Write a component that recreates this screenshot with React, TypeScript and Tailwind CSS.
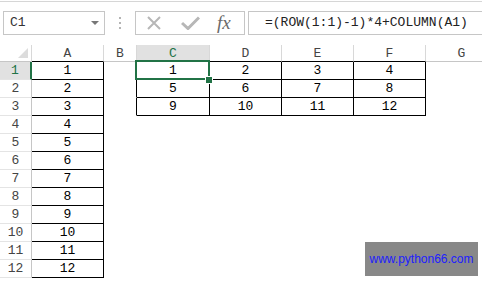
import React from 'react';

const cols = [
  { key: 'A', w: 'w-[72px]' },
  { key: 'B', w: 'w-[33px]' },
  { key: 'C', w: 'w-[73px]' },
  { key: 'D', w: 'w-[72px]' },
  { key: 'E', w: 'w-[72px]' },
  { key: 'F', w: 'w-[72px]' },
  { key: 'G', w: 'w-[72px]' },
];

const table = [
  [1, 2, 3, 4],
  [5, 6, 7, 8],
  [9, 10, 11, 12],
];

// value + border colours for one cell
const cellInfo = (col: string, row: number) => {
  const inA = col === 'A';
  const inBlock = ['C', 'D', 'E', 'F'].includes(col) && row <= 3;
  let value: number | string = '';
  if (inA) value = row;
  if (inBlock) value = table[row - 1][['C', 'D', 'E', 'F'].indexOf(col)];
  const right = inA || inBlock || (col === 'B' && row <= 3) ? 'border-r-black' : 'border-r-transparent';
  const bottom = inA || inBlock ? 'border-b-black' : 'border-b-transparent';
  return { value, right, bottom };
};

function CrossIcon() {
  return (
    <svg width="16" height="14" viewBox="0 0 16 14">
      <path d="M2 1 L14 13 M14 1 L2 13" stroke="#b7b7b7" strokeWidth="2" fill="none" />
    </svg>
  );
}

function CheckIcon() {
  return (
    <svg width="19" height="14" viewBox="0 0 19 14">
      <path d="M1 7 L7 12.5 L18 1.5" stroke="#b7b7b7" strokeWidth="3" fill="none" />
    </svg>
  );
}

export default function App() {
  const rows = Array.from({ length: 12 }, (_, i) => i + 1);

  return (
    <div className="w-[482px] h-[281px] overflow-hidden bg-white font-['Liberation_Mono',monospace] text-[13px]">
      {/* formula bar */}
      <div className="mt-[1px] h-[44px] border-t border-[#d6d6d6] flex items-start pt-[9px]">
        <div className="ml-[3px] w-[102px] h-[24px] border border-[#c6c6c6] flex items-center justify-between pl-[6px] pr-[5px] text-[#333]">
          <span>C1</span>
          <span className="w-0 h-0 border-l-[4px] border-r-[4px] border-t-[4px] border-l-transparent border-r-transparent border-t-[#777]" />
        </div>
        <div className="ml-[14px] mt-[6px] flex flex-col gap-[3px]">
          <span className="w-[2px] h-[2px] bg-[#b4b4b4]" />
          <span className="w-[2px] h-[2px] bg-[#b4b4b4]" />
          <span className="w-[2px] h-[2px] bg-[#b4b4b4]" />
        </div>
        <div className="ml-[14px] w-[110px] h-[24px] border border-[#c6c6c6] flex items-center pl-[10px]">
          <CrossIcon />
          <span className="ml-[19px]"><CheckIcon /></span>
          <span className="ml-[17px] font-['Liberation_Serif',serif] italic text-[19px] leading-none text-[#6a6a6a] -mt-[2px]">fx</span>
        </div>
        <div className="ml-[3px] flex-1 h-[24px] border border-r-0 border-[#c6c6c6] flex items-center pl-[16px] text-[#222]">
          =(ROW(1:1)-1)*4+COLUMN(A1)
        </div>
      </div>

      {/* sheet */}
      <div className="relative">
        {/* column headers */}
        <div className="flex h-[17px]">
          <div className="w-[32px] shrink-0 border-r border-b border-r-[#d8d8d8] border-b-[#c6c6c6] flex items-end justify-end pr-[3px] pb-[3px]">
            <svg width="10" height="10" viewBox="0 0 10 10">
              <polygon points="10,0 10,10 0,10" fill="#dcdcdc" />
            </svg>
          </div>
          {cols.map((c) => {
            const sel = c.key === 'C';
            const black = ['A', 'C', 'D', 'E', 'F'].includes(c.key);
            return (
              <div
                key={c.key}
                className={`${c.w} shrink-0 border-r border-b border-r-[#d8d8d8] flex items-center justify-center leading-none ${
                  black ? 'border-b-black' : 'border-b-[#c6c6c6]'
                } ${sel ? 'bg-[#e1e1e1] text-[#217346]' : 'text-[#444]'}`}
              >
                {c.key}
              </div>
            );
          })}
        </div>

        {/* rows */}
        {rows.map((r) => (
          <div key={r} className="flex h-[18px]">
            <div
              className={`w-[32px] shrink-0 border-b border-b-[#e4e4e4] flex items-center justify-center leading-none ${
                r === 1
                  ? 'bg-[#e1e1e1] text-[#217346] border-r-2 border-r-[#217346]'
                  : 'text-[#444] border-r border-r-[#c6c6c6]'
              }`}
            >
              {r}
            </div>
            {cols.map((c) => {
              const info = cellInfo(c.key, r);
              return (
                <div
                  key={c.key}
                  className={`${c.w} shrink-0 border-r border-b ${info.right} ${info.bottom} flex items-center justify-center leading-none text-black`}
                >
                  {info.value}
                </div>
              );
            })}
          </div>
        ))}

        {/* active cell C1 */}
        <div className="absolute left-[135px] top-[15px] w-[75px] h-[20px] border-2 border-[#217346]" />
        <div className="absolute left-[205px] top-[31px] w-[6px] h-[6px] bg-[#217346] border border-white box-content" />

        {/* watermark */}
        <div className="absolute left-[365px] top-[197px] w-[113px] h-[34px] bg-[#888888] flex items-center justify-center font-['Liberation_Sans',sans-serif] text-[12px] text-[#2020ff]">
          www.python66.com
        </div>
      </div>
    </div>
  );
}
